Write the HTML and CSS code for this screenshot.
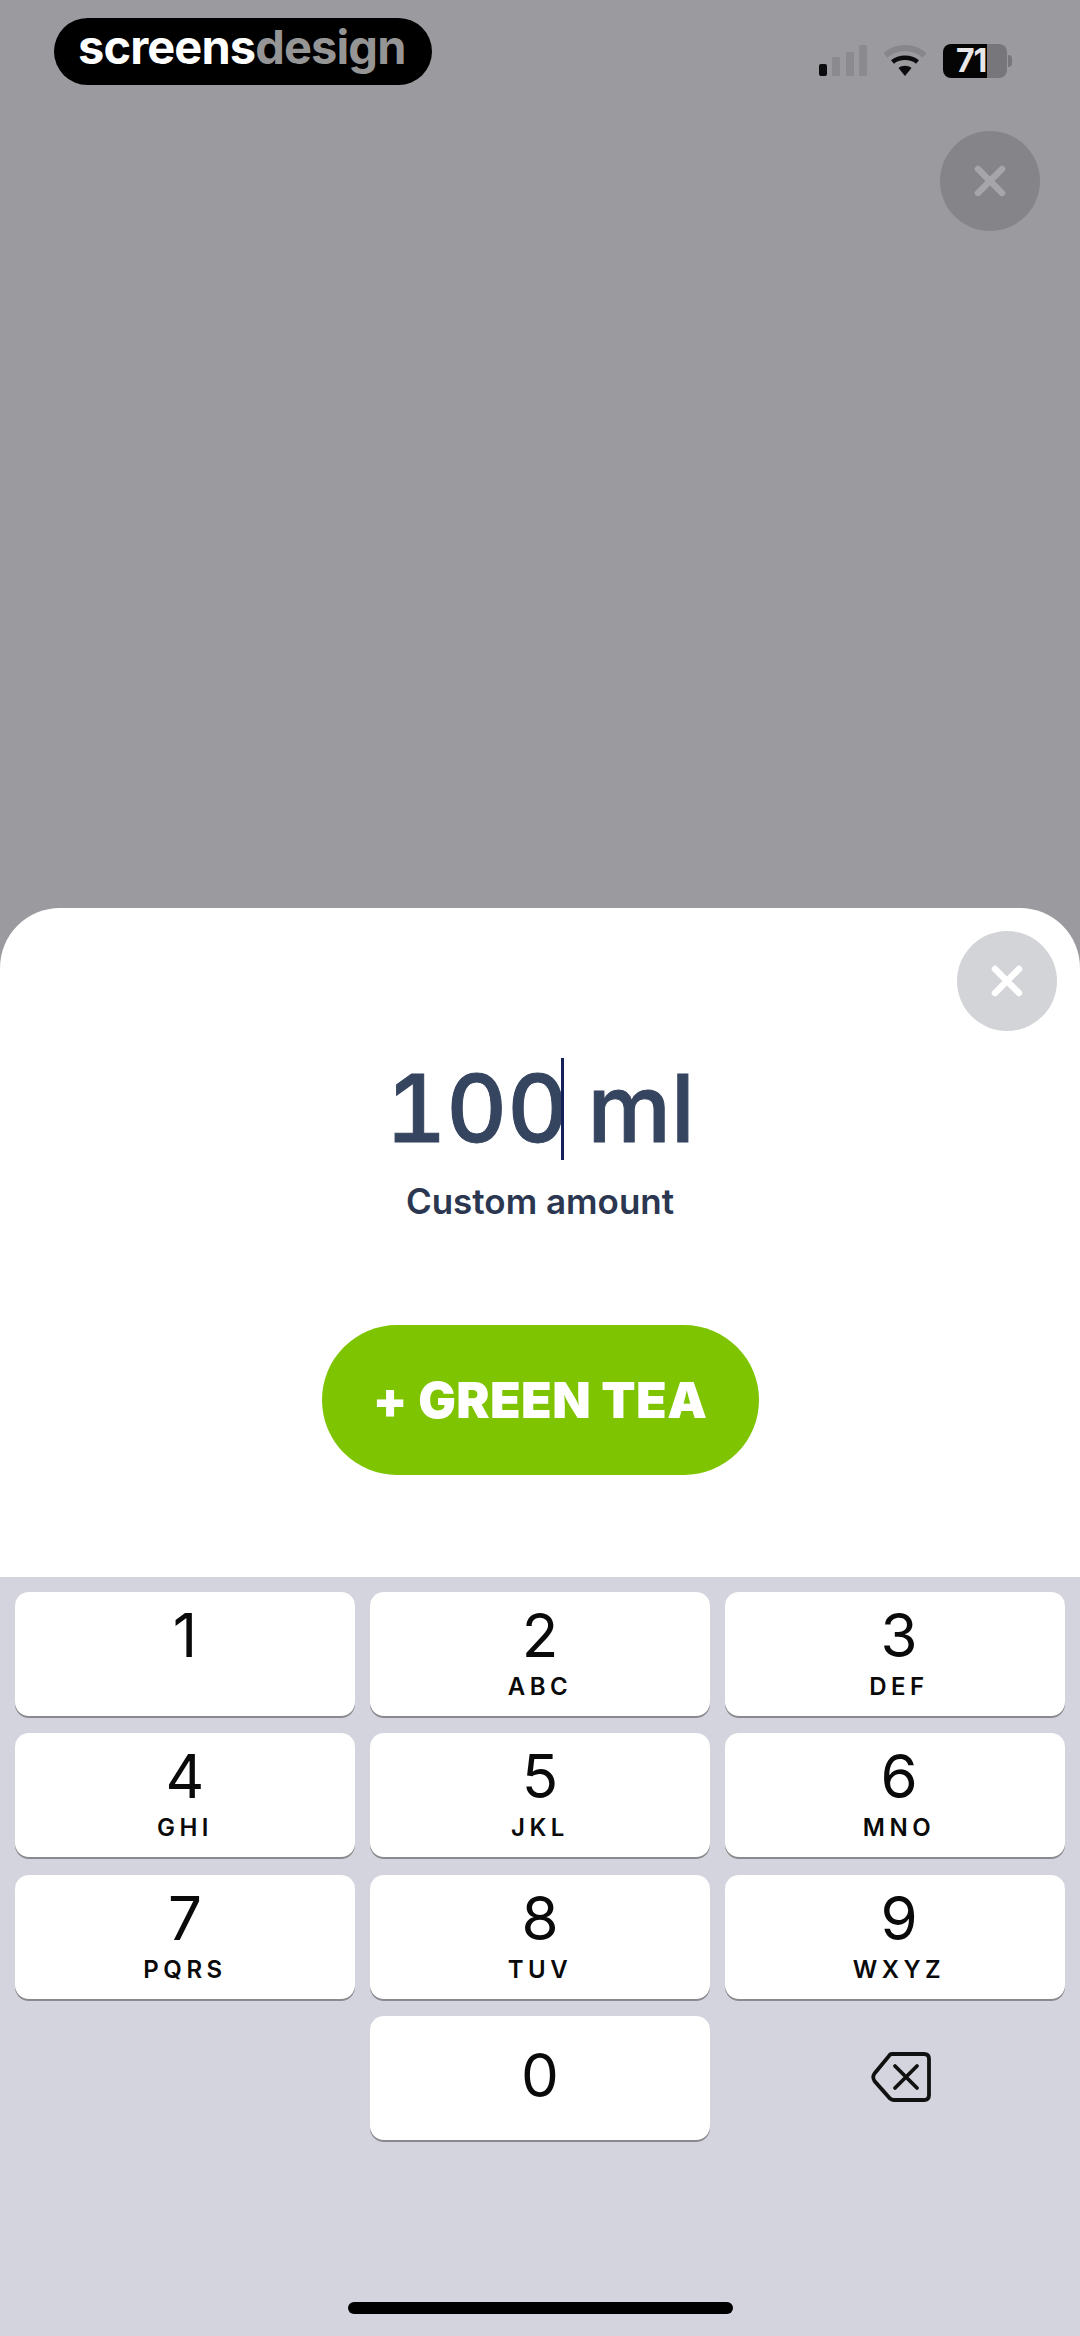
FILE: index.html
```html
<!DOCTYPE html>
<html lang="en">
<head>
  <meta charset="UTF-8">
  <title>Custom amount</title>
  <link rel="stylesheet" href="styles.css">
</head>
<body>
  <div class="backdrop">
    <div class="top-bar">
      <div class="logo"><span class="logo-white">screens</span><span class="logo-grey">design</span></div>
      <div class="status">
        <svg class="signal" width="48" height="31" viewBox="0 0 48 31">
          <rect x="0" y="19" width="8" height="12" rx="2" fill="#0c0c0e"/>
          <rect x="13" y="12" width="8" height="19" rx="1.5" fill="#8b8a8f"/>
          <rect x="27" y="7" width="8" height="24" rx="1.5" fill="#8b8a8f"/>
          <rect x="40" y="0" width="8" height="31" rx="1.5" fill="#8b8a8f"/>
        </svg>
        <svg class="wifi" width="42" height="32" viewBox="0 0 42 32">
          <path d="M1.5 10.5 C12 0.5 30 0.5 40.5 10.5" fill="none" stroke="#87868b" stroke-width="6"/>
          <path d="M8.5 17 C15 11.3 27 11.3 33.5 17" fill="none" stroke="#0c0c0e" stroke-width="4.5"/>
          <path d="M14.5 23 C18 20 24 20 27.5 23 L21 31 Z" fill="#0c0c0e"/>
        </svg>
        <div class="battery">71<span class="battery-tip"></span></div>
      </div>
    </div>
    <div class="backdrop-close">
      <svg width="32" height="32" viewBox="0 0 32 32"><path d="M4 4 L28 28 M28 4 L4 28" stroke="#a6a5aa" stroke-width="6.5" stroke-linecap="round"/></svg>
    </div>
  </div>

  <div class="sheet">
    <div class="sheet-close">
      <svg width="32" height="32" viewBox="0 0 32 32"><path d="M4 4 L28 28 M28 4 L4 28" stroke="#fff" stroke-width="6.5" stroke-linecap="round"/></svg>
    </div>
    <div class="amount">100<span class="caret"></span> ml</div>
    <div class="amount-label">Custom amount</div>
    <button class="add-button">+ GREEN TEA</button>
  </div>

  <div class="keyboard">
    <div class="key"><span class="digit">1</span></div>
    <div class="key"><span class="digit">2</span><span class="letters">ABC</span></div>
    <div class="key"><span class="digit">3</span><span class="letters">DEF</span></div>
    <div class="key"><span class="digit">4</span><span class="letters">GHI</span></div>
    <div class="key"><span class="digit">5</span><span class="letters">JKL</span></div>
    <div class="key"><span class="digit">6</span><span class="letters">MNO</span></div>
    <div class="key"><span class="digit">7</span><span class="letters">PQRS</span></div>
    <div class="key"><span class="digit">8</span><span class="letters">TUV</span></div>
    <div class="key"><span class="digit">9</span><span class="letters">WXYZ</span></div>
    <div class="key-empty"></div>
    <div class="key key-zero"><span class="digit">0</span></div>
    <div class="key-empty key-delete">
      <svg width="60" height="50" viewBox="0 0 60 50">
        <path d="M21 2 H53 Q58 2 58 7 V43 Q58 48 53 48 H23 Q21 48 19 46.5 L3.5 29 Q1 25 3.5 21.5 L18 4 Q19 2 21 2 Z" fill="none" stroke="#111" stroke-width="3.8"/>
        <path d="M24 14 L46 36 M46 14 L24 36" stroke="#111" stroke-width="3.8" stroke-linecap="round"/>
      </svg>
    </div>
    <div class="home-bar"></div>
  </div>
</body>
</html>
```

FILE: styles.css
```css
body {
  margin: 0;
  width: 1080px;
  height: 2336px;
  overflow: hidden;
  display: flex;
  flex-direction: column;
  font-family: 'Inter', sans-serif;
  background: #d3d4de;
}
.backdrop {
  height: 968px;
  flex: none;
  background: #9b9a9f;
  padding: 18px 40px 0 54px;
  box-sizing: border-box;
}
.top-bar {
  display: flex;
  justify-content: space-between;
  align-items: center;
}
.logo {
  width: 378px;
  height: 67px;
  border-radius: 34px;
  background: #000;
  box-sizing: border-box;
  padding-left: 24px;
  font-size: 47px;
  line-height: 58px;
  font-weight: 700;
  letter-spacing: -0.9px;
}
.logo-white {
  color: #fff;
}
.logo-grey {
  color: #959595;
}
.status {
  display: flex;
  align-items: center;
  gap: 17px;
  margin-right: 33px;
  margin-top: 18px;
}
.battery {
  position: relative;
  width: 64px;
  height: 34px;
  border-radius: 8px;
  background: linear-gradient(90deg, #050505 0, #050505 44px, #77767a 44px);
  color: #e8e8e8;
  font-size: 32px;
  font-weight: 700;
  line-height: 34px;
  letter-spacing: -1px;
  padding-left: 13px;
  box-sizing: border-box;
}
.battery-tip {
  position: absolute;
  right: -5px;
  top: 11px;
  width: 4px;
  height: 12px;
  border-radius: 0 4px 4px 0;
  background: #77767a;
}
.backdrop-close {
  width: 100px;
  height: 100px;
  border-radius: 50%;
  background: #858489;
  display: flex;
  align-items: center;
  justify-content: center;
  margin: 46px 0 0 auto;
}
.sheet {
  position: relative;
  height: 669px;
  flex: none;
  margin-top: -60px;
  background: #fff;
  border-radius: 60px 60px 0 0;
  display: flex;
  flex-direction: column;
  align-items: center;
}
.sheet-close {
  position: absolute;
  top: 23px;
  right: 23px;
  width: 100px;
  height: 100px;
  border-radius: 50%;
  background: #d3d4d8;
  display: flex;
  align-items: center;
  justify-content: center;
}
.amount {
  margin-top: 142px;
  font-size: 94px;
  line-height: 116px;
  font-weight: 500;
  color: #36455f;
  -webkit-text-stroke: 1px #36455f;
  font-feature-settings: "tnum";
  word-spacing: -5px;
  white-space: pre;
}
.caret {
  display: inline-block;
  width: 3px;
  height: 102px;
  margin: 0 3px 0 -7px;
  background: #14205a;
  vertical-align: -18px;
}
.amount-label {
  margin-top: 14px;
  font-size: 35px;
  line-height: 42px;
  font-weight: 600;
  color: #2b3750;
}
.add-button {
  margin-top: 103px;
  width: 437px;
  height: 150px;
  border: none;
  border-radius: 75px;
  background: #7fc400;
  color: #fff;
  font-family: 'Inter', sans-serif;
  font-size: 50px;
  font-weight: 900;
  letter-spacing: 0.4px;
}
.keyboard {
  flex: 1;
  position: relative;
  display: grid;
  grid-template-columns: repeat(3, 340px);
  grid-auto-rows: 124px;
  column-gap: 15px;
  row-gap: 17.4px;
  padding: 15px 15px 0;
  background: #d3d4de;
}
.key {
  background: #fff;
  border-radius: 14px;
  box-shadow: 0 2px 0 #8a8a8e;
  display: flex;
  flex-direction: column;
  align-items: center;
  color: #0a0a0a;
}
.key:nth-child(3n) {
  padding-left: 8px;
  box-sizing: border-box;
}
.digit {
  margin-top: 9px;
  font-size: 60px;
  line-height: 68px;
  font-weight: 400;
}
.letters {
  margin-top: 5px;
  font-size: 24px;
  line-height: 26px;
  font-weight: 600;
  letter-spacing: 4.5px;
}
.key-zero .digit {
  margin-top: 25px;
}
.key-delete {
  display: flex;
  align-items: center;
  justify-content: center;
  padding: 0 0 2px 12px;
}
.home-bar {
  position: absolute;
  left: 348px;
  bottom: 22px;
  width: 385px;
  height: 12px;
  border-radius: 6px;
  background: #000;
}
```
